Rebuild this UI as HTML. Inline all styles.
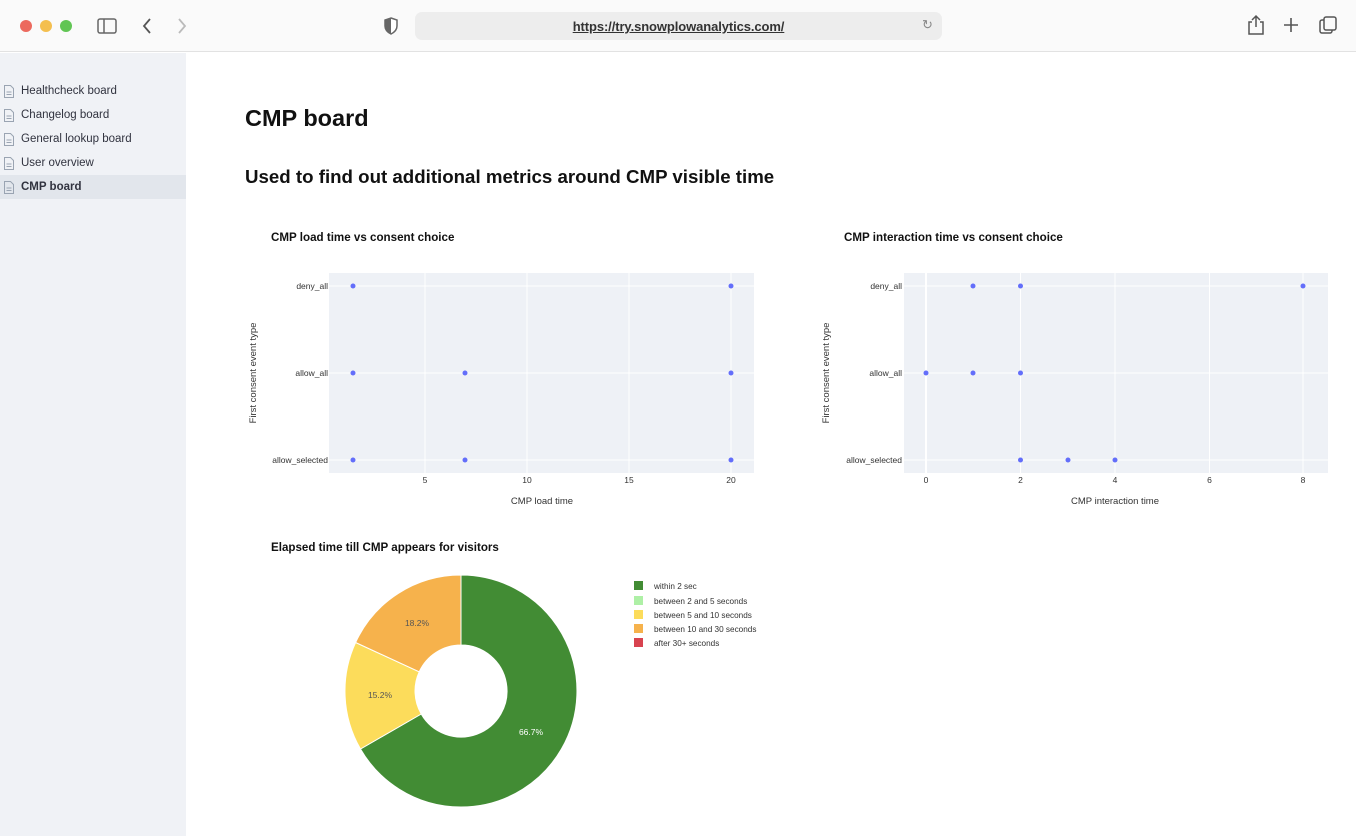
<!DOCTYPE html>
<html><head><meta charset="utf-8"><style>
*{margin:0;padding:0;box-sizing:border-box}
body{width:1356px;height:836px;overflow:hidden;background:#fff;font-family:"Liberation Sans",sans-serif;position:relative}
.top{position:absolute;left:0;top:0;width:1356px;height:52px;background:#fafafa;border-bottom:1px solid #e2e2e2}
.side{position:absolute;left:0;top:53px;width:186px;height:783px;background:#f0f2f6}
.item{position:absolute;left:0;width:186px;height:24px;font-size:11.5px;color:#31333f;line-height:24px;padding-left:21px}
.item svg{position:absolute;left:3px;top:6px}
.sel{background:#e2e6ec;font-weight:bold}
.t{position:absolute;color:#111;font-weight:bold;white-space:nowrap}
</style></head><body>
<div class="top">
<div style="position:absolute;left:20px;top:20px;width:12px;height:12px;border-radius:50%;background:#ec6a5e"></div>
<div style="position:absolute;left:40px;top:20px;width:12px;height:12px;border-radius:50%;background:#f4bf4f"></div>
<div style="position:absolute;left:60px;top:20px;width:12px;height:12px;border-radius:50%;background:#61c554"></div>
<svg style="position:absolute;left:96px;top:16px" width="22" height="20"><rect x="2" y="3" width="18" height="14" rx="2" fill="none" stroke="#666" stroke-width="1.5"/><line x1="8" y1="3" x2="8" y2="17" stroke="#666" stroke-width="1.5"/></svg>
<svg style="position:absolute;left:140px;top:16px" width="14" height="20"><path d="M10 3 L4 10 L10 17" fill="none" stroke="#555" stroke-width="1.8"/></svg>
<svg style="position:absolute;left:175px;top:16px" width="14" height="20"><path d="M4 3 L10 10 L4 17" fill="none" stroke="#bbb" stroke-width="1.8"/></svg>
<svg style="position:absolute;left:383px;top:16px" width="16" height="20"><path d="M8 2 L14 4 L14 10 Q14 15 8 18 Q2 15 2 10 L2 4 Z" fill="#fff" stroke="#666" stroke-width="1.5"/><path d="M8 2 L2 4 L2 10 Q2 15 8 18Z" fill="#666"/></svg>
<div style="position:absolute;left:415px;top:12px;width:527px;height:28px;border-radius:7px;background:#ededed"></div>
<div style="position:absolute;left:415px;top:13px;width:527px;height:28px;line-height:28px;text-align:center;font-size:13px;font-weight:bold;color:#333;text-decoration:underline;letter-spacing:-0.1px">https://try.snowplowanalytics.com/</div>
<div style="position:absolute;left:922px;top:17px;font-size:13px;color:#888">↻</div>
<svg style="position:absolute;left:1246px;top:14px" width="20" height="22"><path d="M6 8 H3 V20 H17 V8 H14" fill="none" stroke="#555" stroke-width="1.5"/><path d="M10 2 V13 M6 6 L10 2 L14 6" fill="none" stroke="#555" stroke-width="1.5"/></svg>
<svg style="position:absolute;left:1282px;top:16px" width="18" height="18"><path d="M9 2 V16 M2 9 H16" stroke="#555" stroke-width="1.6"/></svg>
<svg style="position:absolute;left:1318px;top:15px" width="20" height="20"><rect x="2" y="5" width="12" height="13" rx="2" fill="#fafafa" stroke="#555" stroke-width="1.5"/><rect x="6" y="2" width="12" height="13" rx="2" fill="#fafafa" stroke="#555" stroke-width="1.5"/></svg>
</div>
<div class="side">
<div class="item" style="top:26px"><svg width="12" height="13"><path d="M1.5 .5H7.5L10.5 3.5V12.5H1.5Z" fill="none" stroke="#9aa4b2"/><path d="M3.5 7H8.5M3.5 9.5H8.5" stroke="#9aa4b2"/></svg>Healthcheck board</div>
<div class="item" style="top:50px"><svg width="12" height="13"><path d="M1.5 .5H7.5L10.5 3.5V12.5H1.5Z" fill="none" stroke="#9aa4b2"/><path d="M3.5 7H8.5M3.5 9.5H8.5" stroke="#9aa4b2"/></svg>Changelog board</div>
<div class="item" style="top:74px"><svg width="12" height="13"><path d="M1.5 .5H7.5L10.5 3.5V12.5H1.5Z" fill="none" stroke="#9aa4b2"/><path d="M3.5 7H8.5M3.5 9.5H8.5" stroke="#9aa4b2"/></svg>General lookup board</div>
<div class="item" style="top:98px"><svg width="12" height="13"><path d="M1.5 .5H7.5L10.5 3.5V12.5H1.5Z" fill="none" stroke="#9aa4b2"/><path d="M3.5 7H8.5M3.5 9.5H8.5" stroke="#9aa4b2"/></svg>User overview</div>
<div class="item sel" style="top:122px"><svg width="12" height="13"><path d="M1.5 .5H7.5L10.5 3.5V12.5H1.5Z" fill="none" stroke="#9aa4b2"/><path d="M3.5 7H8.5M3.5 9.5H8.5" stroke="#9aa4b2"/></svg>CMP board</div>
</div>
<div class="t" style="left:245px;top:105px;font-size:23.5px">CMP board</div>
<div class="t" style="left:245px;top:166px;font-size:18.7px">Used to find out additional metrics around CMP visible time</div>
<div class="t" style="left:271px;top:231px;font-size:11.6px">CMP load time vs consent choice</div>
<div class="t" style="left:844px;top:231px;font-size:11.6px">CMP interaction time vs consent choice</div>
<div class="t" style="left:271px;top:541px;font-size:11.6px">Elapsed time till CMP appears for visitors</div>
<svg style="position:absolute;left:0;top:0" width="1356" height="836" font-family="Liberation Sans, sans-serif" font-size="8.5" fill="#333">
<rect x="329" y="273" width="425" height="200" fill="#eef1f6"/>
<g stroke="#fff" stroke-width="1"><line x1="425" y1="273" x2="425" y2="473"/><line x1="527" y1="273" x2="527" y2="473"/><line x1="629" y1="273" x2="629" y2="473"/><line x1="731" y1="273" x2="731" y2="473"/><line x1="329" y1="286" x2="754" y2="286"/><line x1="329" y1="373" x2="754" y2="373"/><line x1="329" y1="460" x2="754" y2="460"/></g>
<g fill="#636efa"><circle cx="353" cy="286" r="2.5"/><circle cx="731" cy="286" r="2.5"/><circle cx="353" cy="373" r="2.5"/><circle cx="465" cy="373" r="2.5"/><circle cx="731" cy="373" r="2.5"/><circle cx="353" cy="460" r="2.5"/><circle cx="465" cy="460" r="2.5"/><circle cx="731" cy="460" r="2.5"/></g>
<g text-anchor="end"><text x="328" y="289">deny_all</text><text x="328" y="376">allow_all</text><text x="328" y="463">allow_selected</text></g>
<g text-anchor="middle"><text x="425" y="483">5</text><text x="527" y="483">10</text><text x="629" y="483">15</text><text x="731" y="483">20</text><text x="542" y="504" font-size="9.5">CMP load time</text></g>
<text transform="translate(256,373) rotate(-90)" text-anchor="middle" font-size="9.5">First consent event type</text>
<rect x="904" y="273" width="424" height="200" fill="#eef1f6"/>
<g stroke="#fff" stroke-width="1"><line x1="926" y1="273" x2="926" y2="473" stroke-width="2"/><line x1="1020.5" y1="273" x2="1020.5" y2="473"/><line x1="1115" y1="273" x2="1115" y2="473"/><line x1="1209.5" y1="273" x2="1209.5" y2="473"/><line x1="1303" y1="273" x2="1303" y2="473"/><line x1="904" y1="286" x2="1328" y2="286"/><line x1="904" y1="373" x2="1328" y2="373"/><line x1="904" y1="460" x2="1328" y2="460"/></g>
<g fill="#636efa"><circle cx="973" cy="286" r="2.5"/><circle cx="1020.5" cy="286" r="2.5"/><circle cx="1303" cy="286" r="2.5"/><circle cx="926" cy="373" r="2.5"/><circle cx="973" cy="373" r="2.5"/><circle cx="1020.5" cy="373" r="2.5"/><circle cx="1020.5" cy="460" r="2.5"/><circle cx="1068" cy="460" r="2.5"/><circle cx="1115" cy="460" r="2.5"/></g>
<g text-anchor="end"><text x="902" y="289">deny_all</text><text x="902" y="376">allow_all</text><text x="902" y="463">allow_selected</text></g>
<g text-anchor="middle"><text x="926" y="483">0</text><text x="1020.5" y="483">2</text><text x="1115" y="483">4</text><text x="1209.5" y="483">6</text><text x="1303" y="483">8</text><text x="1115" y="504" font-size="9.5">CMP interaction time</text></g>
<text transform="translate(829,373) rotate(-90)" text-anchor="middle" font-size="9.5">First consent event type</text>
<path d="M461 575 A116 116 0 1 1 360.5 749 L421.2 714 A46 46 0 1 0 461 645Z" fill="#428c34" stroke="#fff" stroke-width="1"/>
<path d="M360.5 749 A116 116 0 0 1 355.6 642.5 L419.2 671.8 A46 46 0 0 0 421.2 714Z" fill="#fcdc5b" stroke="#fff" stroke-width="1"/>
<path d="M355.6 642.5 A116 116 0 0 1 461 575 L461 645 A46 46 0 0 0 419.2 671.8Z" fill="#f6b24c" stroke="#fff" stroke-width="1"/>
<g text-anchor="middle" font-size="8.5"><text x="531" y="735" fill="#fff">66.7%</text><text x="380" y="698" fill="#555">15.2%</text><text x="417" y="626" fill="#555">18.2%</text></g>
<rect x="634" y="581" width="9" height="9" fill="#428c34"/><rect x="634" y="596" width="9" height="9" fill="#aef0a6"/><rect x="634" y="610" width="9" height="9" fill="#fcdc5b"/><rect x="634" y="624" width="9" height="9" fill="#f6b24c"/><rect x="634" y="638" width="9" height="9" fill="#d8434f"/>
<g font-size="8.2"><text x="654" y="589">within 2 sec</text><text x="654" y="604">between 2 and 5 seconds</text><text x="654" y="618">between 5 and 10 seconds</text><text x="654" y="632">between 10 and 30 seconds</text><text x="654" y="646">after 30+ seconds</text></g>
</svg>
</body></html>
